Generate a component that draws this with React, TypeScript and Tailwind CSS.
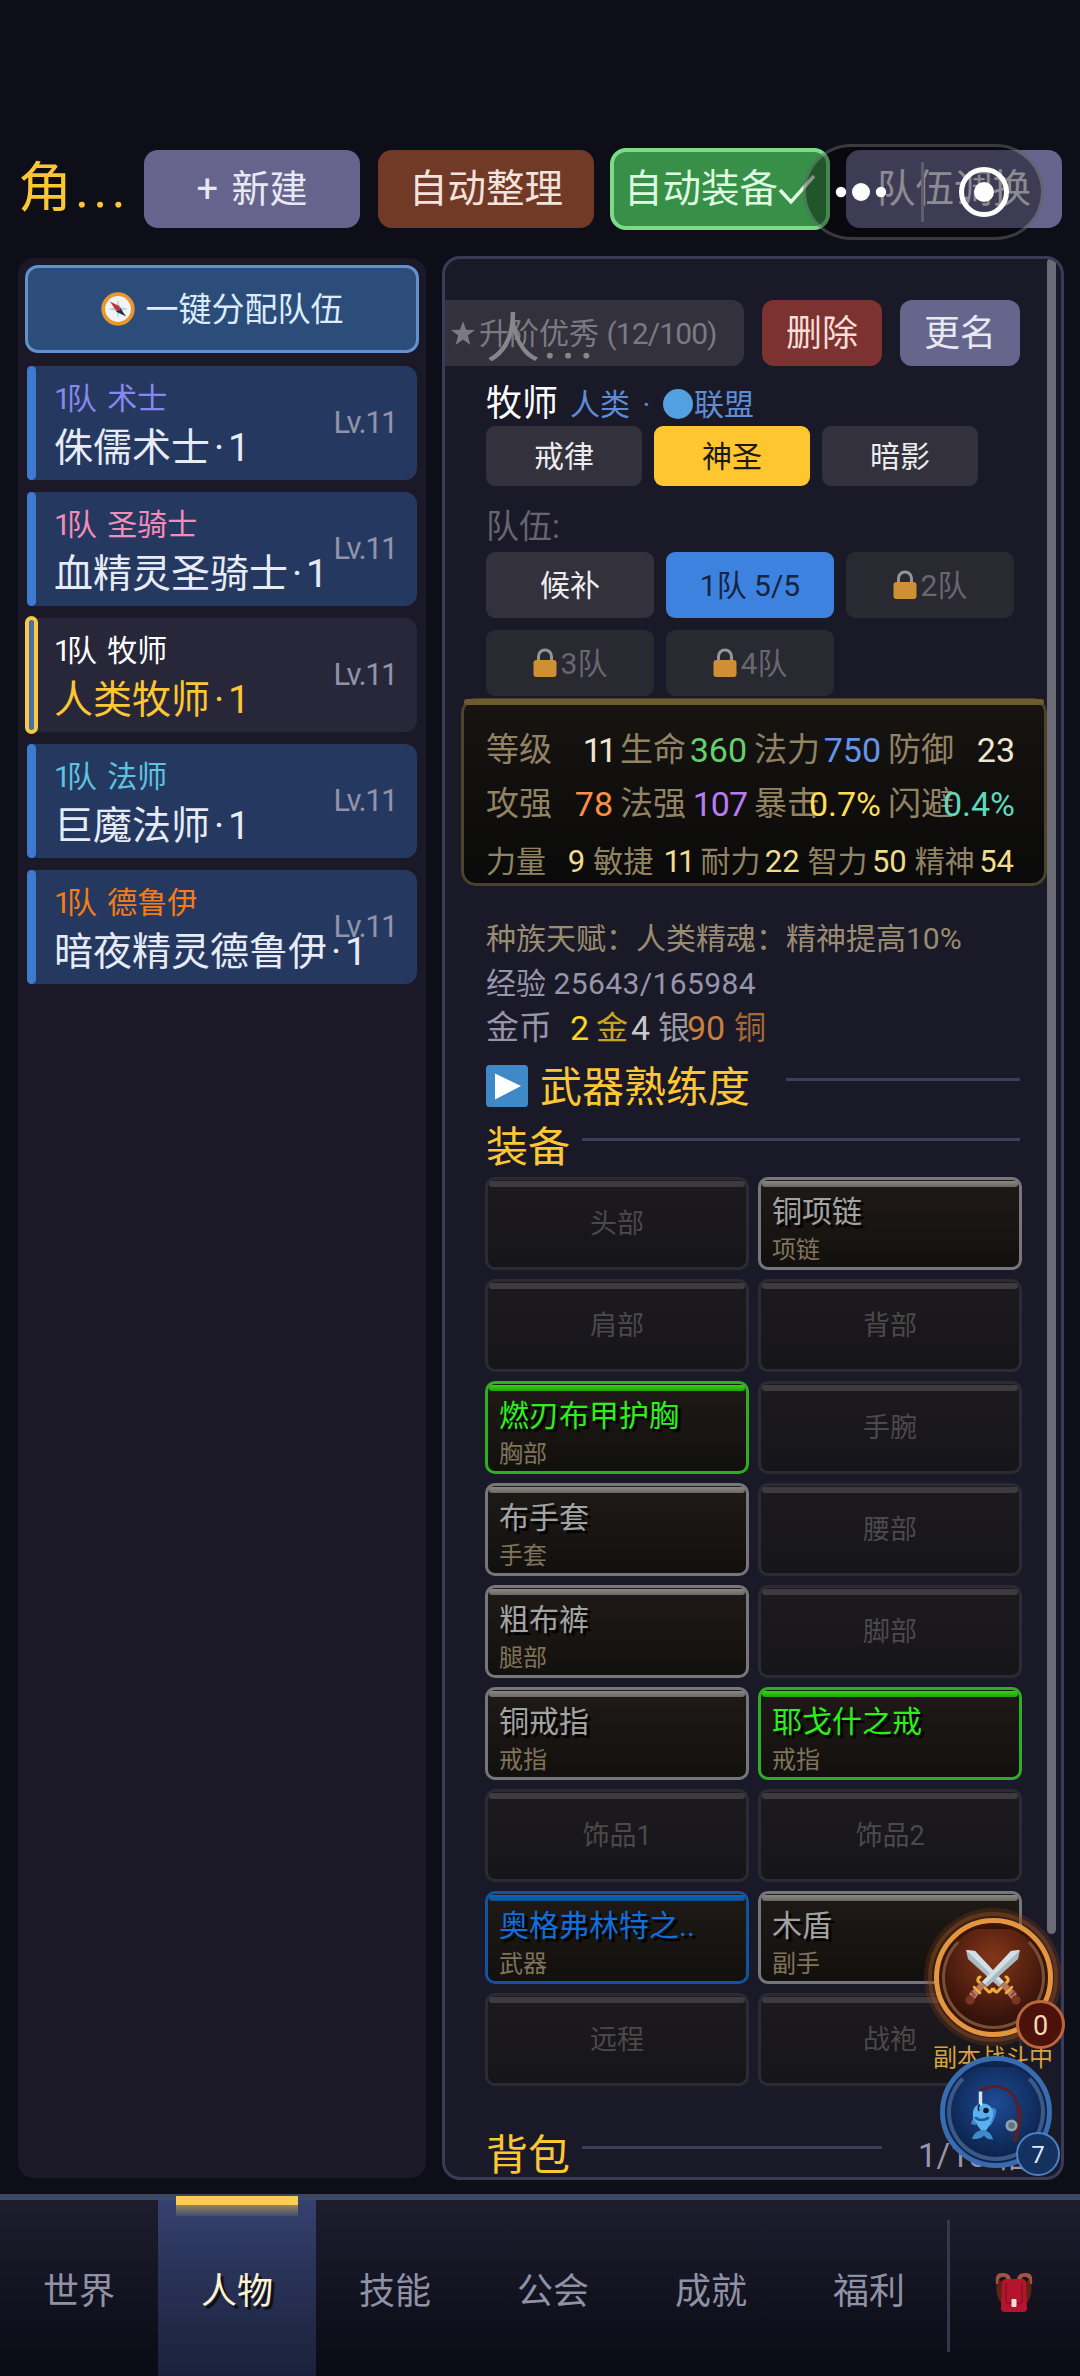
import React from "react";

type Member = { job: string; jobColor: string; name: string; selected?: boolean };

const members: Member[] = [
  { job: "术士", jobColor: "text-[#8788ee]", name: "侏儒术士" },
  { job: "圣骑士", jobColor: "text-[#f48cba]", name: "血精灵圣骑士" },
  { job: "牧师", jobColor: "text-white", name: "人类牧师", selected: true },
  { job: "法师", jobColor: "text-[#5fc3e0]", name: "巨魔法师" },
  { job: "德鲁伊", jobColor: "text-[#f77c12]", name: "暗夜精灵德鲁伊" },
];

type Quality = "empty" | "common" | "green" | "blue";
type Slot = { label: string; item?: string; quality: Quality };

const slots: Slot[] = [
  { label: "头部", quality: "empty" },
  { label: "项链", item: "铜项链", quality: "common" },
  { label: "肩部", quality: "empty" },
  { label: "背部", quality: "empty" },
  { label: "胸部", item: "燃刃布甲护胸", quality: "green" },
  { label: "手腕", quality: "empty" },
  { label: "手套", item: "布手套", quality: "common" },
  { label: "腰部", quality: "empty" },
  { label: "腿部", item: "粗布裤", quality: "common" },
  { label: "脚部", quality: "empty" },
  { label: "戒指", item: "铜戒指", quality: "common" },
  { label: "戒指", item: "耶戈什之戒", quality: "green" },
  { label: "饰品1", quality: "empty" },
  { label: "饰品2", quality: "empty" },
  { label: "武器", item: "奥格弗林特之..", quality: "blue" },
  { label: "副手", item: "木盾", quality: "common" },
  { label: "远程", quality: "empty" },
  { label: "战袍", quality: "empty" },
];

const slotStyle: Record<Quality, { border: string; bar: string; text: string }> = {
  empty: { border: "border-[#2c2b34]", bar: "bg-[#3d3b3f]", text: "" },
  common: { border: "border-[#77767a]", bar: "bg-linear-to-b from-[#8a8884] to-[#6a6864]", text: "text-[#a3a3a3]" },
  green: { border: "border-[#2fae24]", bar: "bg-linear-to-b from-[#33d414] to-[#1fa30b]", text: "text-[#2df01a]" },
  blue: { border: "border-[#12529f]", bar: "bg-linear-to-b from-[#0e66bf] to-[#0d4f96]", text: "text-[#0f6fdc]" },
};

const mainStats = [
  { label: "等级", value: "11", color: "text-[#f1e6cf] tracking-[-4px]" },
  { label: "生命", value: "360", color: "text-[#66d16b]" },
  { label: "法力", value: "750", color: "text-[#6495ee]" },
  { label: "防御", value: "23", color: "text-[#f1e6cf]" },
  { label: "攻强", value: "78", color: "text-[#fb8f45]" },
  { label: "法强", value: "107", color: "text-[#b97bf3] tracking-[-1px]" },
  { label: "暴击", value: "0.7%", color: "text-[#ffdd55]" },
  { label: "闪避", value: "0.4%", color: "text-[#5fd8bd]" },
];

const attributes = [
  { label: "力量", value: "9" },
  { label: "敏捷", value: "11" },
  { label: "耐力", value: "22" },
  { label: "智力", value: "50" },
  { label: "精神", value: "54" },
];

function Compass() {
  return (
    <svg viewBox="0 0 34 34" className="h-[34px] w-[34px]">
      <circle cx="17" cy="17" r="14.8" fill="#f2f3f5" stroke="#e8962e" strokeWidth="3.8" />
      <path d="M17 7l1.500 8 8.500 2-8.500 2-1.500 8-1.500-8-8.500-2 8.500-2z" fill="#b9cdda" />
      <path d="M9 9.500l10 5-4 4z" fill="#cf2d36" />
      <path d="M25 24.500l-10-5 4-4z" fill="#26323a" />
      <circle cx="17" cy="17" r="2" fill="#a9414d" />
    </svg>
  );
}

function Lock() {
  return (
    <svg viewBox="0 0 24 30" className="h-[30px] w-[24px]">
      <path d="M5.500 14V8.500a6.500 6.500 0 0 1 13 0V14" fill="none" stroke="#8d979d" strokeWidth="3" />
      <rect x="0.500" y="12" width="23" height="17" rx="3" fill="#cf8f35" />
    </svg>
  );
}

function Sword() {
  return (
    <g>
      <path d="M2 2l2 9 31 28 5-5L11 3z" fill="#a9bac2" />
      <path d="M2 2l9 1 29 31-3 2z" fill="#d3dfe4" />
      <path d="M30 41a3 3 0 0 0 3 3l11-11a3 3 0 0 0-2-4" fill="none" stroke="#eeb03a" strokeWidth="3" strokeLinecap="round" />
      <path d="M37 38l4-4 12 12-5 6z" fill="#b97860" />
      <path d="M43 44l3-5M47 48l4-5" stroke="#8a4a3c" strokeWidth="2" />
      <path d="M42 45l6-6" stroke="#eeb03a" strokeWidth="2.500" strokeLinecap="round" />
      <circle cx="52" cy="52" r="4.600" fill="#7b3422" />
    </g>
  );
}

function Swords() {
  return (
    <svg viewBox="0 0 58 58" className="h-[58px] w-[58px]">
      <Sword />
      <g transform="translate(58 0) scale(-1 1)">
        <Sword />
      </g>
    </svg>
  );
}

function Fishing() {
  return (
    <svg viewBox="0 0 60 60" className="h-[60px] w-[60px] shrink-0">
      <path d="M15 8C24 3 36 3 44 10c9 8 10 22 9 34" fill="none" stroke="#54202a" strokeWidth="3.200" strokeLinecap="round" />
      <path d="M53 26c1 12-1 22-4 32" fill="none" stroke="#54202a" strokeWidth="4.500" strokeLinecap="round" />
      <circle cx="45.500" cy="43.500" r="6" fill="#8fa3ad" />
      <circle cx="45.500" cy="43.500" r="3.200" fill="#5f747e" />
      <path d="M26 26c4 0 5 2 4 5-1 6-4 11-7 14z" fill="#3a86c9" />
      <path d="M9 30l-4 12 5 1z" fill="#3c8ccb" />
      <path d="M17 21.500c7 0 11 5 10 12-1 7-5 12-9 18-5-5-9-11-11-17-1-8 3-13 10-13z" fill="#5ab0f0" />
      <path d="M18 48c4 1 8 4 9 9.500-4 0-7-1-9-4-3 3-8 4-12 3.500 1-5 5-9 12-9z" fill="#3c8ccb" />
      <circle cx="20" cy="28.500" r="2.800" fill="#14181d" />
      <path d="M10 36c3 2.500 8 2.500 12 0" fill="none" stroke="#1f5a94" strokeWidth="2.800" strokeLinecap="round" />
      <path d="M14.500 9.500v14" stroke="#d3e3f4" strokeWidth="3.500" />
      <path d="M14 23c-2 0-2 4-1 6" fill="none" stroke="#14181d" strokeWidth="1.500" />
    </svg>
  );
}

function Backpack() {
  return (
    <svg viewBox="0 0 40 42" className="h-[42px] w-[40px]">
      <path d="M4 8c-3 9-2 20 6 27V12z" fill="#5f2314" />
      <path d="M36 8c3 9 2 20-6 27V12z" fill="#5f2314" />
      <path d="M2 13C1 5 3 2 8 2c6 0 8 2 9 6l-4 1c-1-3-3-4-5-3-3 1-4 3-4 7z" fill="#a3533f" />
      <path d="M38 13c1-8-1-11-6-11-6 0-8 2-9 6l4 1c1-3 3-4 5-3 3 1 4 3 4 7z" fill="#a3533f" />
      <path d="M8 12c0-3 2-4 4-4h16c2 0 4 1 4 4l1 25c0 3-1 4-4 4H11c-3 0-4-1-4-4z" fill="#b5142e" />
      <path d="M12 12v18c0 1 1 2 2 2h12c1 0 2-1 2-2V12" fill="none" stroke="#8d0f24" strokeWidth="1.600" />
      <rect x="17.500" y="28" width="5" height="8" rx="1" fill="#f2dfe2" />
    </svg>
  );
}

function Header() {
  return (
    <header className="flex h-[256px] items-start gap-[18px] px-[18px] pt-[150px]">
      <h1 className="flex h-[78px] w-[108px] items-center text-[54px] leading-none whitespace-nowrap text-[#fcc634]">
        <span>角</span>
        <span className="ml-[3px] tracking-[4px]">...</span>
      </h1>
      <button className="h-[78px] w-[216px] rounded-[14px] bg-[#66648c] text-[38px] text-[#e8e8f2] [word-spacing:4px]">+ 新建</button>
      <button className="h-[78px] w-[216px] rounded-[14px] bg-[#713a26] text-[38.5px] text-[#f2e3dc]">自动整理</button>
      <button className="-mx-[2px] -mt-[2px] flex h-[82px] w-[220px] items-center justify-center rounded-[16px] border-4 border-[#7bdc88] bg-[#378f48] text-[38.5px] whitespace-nowrap text-[#defbe2]">
        自动装备
        <svg viewBox="0 0 38 32" className="h-8 w-[38px]">
          <path d="M2 17l11 12L36 3" fill="none" stroke="#defbe2" strokeWidth="3.500" />
        </svg>
      </button>
      <button className="h-[78px] w-[216px] rounded-[14px] bg-[#66648c] text-[38.5px] text-[#e8e8f2]">队伍调换</button>
    </header>
  );
}

function SystemCapsule() {
  return (
    <div className="absolute top-[144px] left-[803px] h-[96px] w-[241px] rounded-full border-[3px] border-white/20 bg-black/40">
      <svg viewBox="0 0 235 90" className="h-full w-full">
        <circle cx="35" cy="45" r="5.200" fill="#fff" />
        <circle cx="55" cy="45" r="9" fill="#fff" />
        <circle cx="75" cy="45" r="5.200" fill="#fff" />
        <rect x="115" y="15" width="3" height="60" fill="#5d5d6c" />
        <circle cx="178" cy="45" r="22.500" fill="none" stroke="#fff" strokeWidth="5" />
        <circle cx="178" cy="45" r="10" fill="#fff" />
      </svg>
    </div>
  );
}

function MemberCard({ m }: { m: Member }) {
  return (
    <li className={`relative h-[114px] rounded-l-[5px] rounded-r-[12px] pl-[27px] ${m.selected ? "bg-[#28273a]" : "bg-[#253960]"}`}>
      <span
        className={
          m.selected
            ? "absolute -top-[2px] -left-[2px] h-[118px] w-[13px] rounded-full border-[4px] border-[#f8c846] bg-[#47719f]"
            : "absolute top-0 left-0 h-full w-[9px] rounded-full bg-[#3e7bd0]"
        }
      />
      <div className={`pt-[17px] text-[30px] leading-[32px] [word-spacing:3px] ${m.jobColor}`}>
        <span className="tracking-[-4px]">1</span>队 {m.job}
      </div>
      <div className={`relative mt-[13px] flex text-[39px] leading-[40px] whitespace-nowrap ${m.selected ? "text-[#fcc634]" : "text-[#e6ebf5]"}`}>
        {m.name}
        <span className="w-[18px] text-center">·</span>
        <span>1</span>
      </div>
      <span className="absolute top-[40px] right-[20px] text-[31px] leading-[34px] tracking-[-1.5px] text-[#9192ab]">Lv.11</span>
    </li>
  );
}

function Roster() {
  return (
    <aside className="mt-[2px] h-[1920px] w-[408px] rounded-[16px] bg-[#1b1927] px-[7px] pt-[7px]">
      <button className="flex h-[88px] w-[394px] items-center justify-center gap-[11px] rounded-[13px] border-[3px] border-[#6490cb] bg-[#2c4d79] text-[33px] text-[#dcecfb]">
        <Compass />
        <span className="mt-[2px]">一键分配队伍</span>
      </button>
      <ul className="mt-[13px] ml-[2px] flex w-[390px] flex-col gap-[12px]">
        {members.map((m) => (
          <MemberCard key={m.name} m={m} />
        ))}
      </ul>
    </aside>
  );
}

function SpecTab({ label, active }: { label: string; active?: boolean }) {
  return (
    <button className={`h-[60px] w-[156px] rounded-[9px] text-[30px] ${active ? "bg-[#ffc62f] text-[#1d1918]" : "bg-[#32313c] text-[#ececef]"}`}>
      {label}
    </button>
  );
}

function LockedTeam({ label }: { label: string }) {
  return (
    <button className="flex h-[66px] w-[168px] items-center justify-center gap-[4px] rounded-[9px] bg-[#292932] text-[30px] text-[#68676f]">
      <Lock />
      <span>{label}</span>
    </button>
  );
}

function StatBox() {
  return (
    <section className="relative mt-[2px] -ml-[25px] h-[188px] w-[586px] rounded-[15px] border-[3px] border-[#4b4228] bg-linear-to-b from-[#171411] to-[#0a0a0a] px-[22px] pt-[32px]">
      <span className="absolute -top-[2px] left-0 h-[6px] w-full rounded-full bg-[#6e5c31]" />
      <dl className="grid w-[528px] grid-cols-4 gap-x-[8px] gap-y-[20px]">
        {mainStats.map((s) => (
          <div key={s.label} className="flex h-[34px] w-[126px] items-center leading-[34px]">
            <dt className="w-[66px] shrink-0 text-[33px] text-[#928363]">{s.label}</dt>
            <dd className={`flex w-[61px] shrink-0 justify-end text-[34px] whitespace-nowrap ${s.color}`}>{s.value}</dd>
          </div>
        ))}
      </dl>
      <dl className="mt-[25px] grid w-[528px] grid-cols-5 gap-x-[8px]">
        {attributes.map((s) => (
          <div key={s.label} className="flex h-[32px] items-center justify-between leading-[32px]">
            <dt className="text-[30px] text-[#928363]">{s.label}</dt>
            <dd className={`text-[31px] text-[#f1dc8b] ${s.value === "11" ? "tracking-[-3px]" : ""}`}>{s.value}</dd>
          </div>
        ))}
      </dl>
    </section>
  );
}

function SlotCell({ slot }: { slot: Slot }) {
  const s = slotStyle[slot.quality];
  const empty = slot.quality === "empty";
  return (
    <div
      className={`relative h-[93px] w-[264px] rounded-[10px] border-[3px] ${s.border} ${
        empty ? "bg-linear-to-b from-[#1c1a1e] to-[#161519]" : "bg-linear-to-b from-[#1f1a16] to-[#12100e]"
      }`}
    >
      <span className={`absolute top-[1px] left-[1px] h-[6px] w-[256px] rounded-full ${s.bar}`} />
      {empty ? (
        <div className="flex h-full items-center justify-center pt-[2px] text-[27px] text-[#4c4949]">{slot.label}</div>
      ) : (
        <div className="pt-[15px] pl-[11px]">
          <div className={`text-[30px] leading-[34px] [text-shadow:3px_3px_1px_#000] ${s.text}`}>{slot.item}</div>
          <div className="mt-[8px] text-[24px] leading-[26px] text-[#80735b]">{slot.label}</div>
        </div>
      )}
    </div>
  );
}

function CharacterPanel() {
  return (
    <main className="relative ml-[16px] h-[1924px] w-[622px] overflow-hidden rounded-[18px] border-[3px] border-[#3b3b58] bg-[#1a1927] pt-[41px] pl-[41px]">
      <span className="absolute -top-px right-[5px] h-[1676px] w-[9px] rounded-full bg-[#6b6b76]" />
      <div className="relative -ml-[41px] flex gap-[18px]">
        <button className="flex h-[66px] w-[299px] items-center rounded-r-[12px] bg-[#32313c] pl-[6px] text-[30px] whitespace-nowrap text-[#7b7a84]">
          <svg viewBox="0 0 24 24" className="mr-[4px] h-[24px] w-[24px] shrink-0">
            <path d="M12 0l3 8.800 9 .2-7.200 5.600L19.400 24 12 18.500 4.600 24l2.600-9.400L0 9l9-.2z" fill="#7b7a84" />
          </svg>
          <span>
            升阶优秀 <span className="tracking-[-0.9px]">(12/100)</span>
          </span>
        </button>
        <button className="h-[66px] w-[120px] rounded-[12px] bg-[#7c3231] pt-[2px] text-[36px] text-[#f8dcd6]">删除</button>
        <button className="h-[66px] w-[120px] rounded-[12px] bg-[#66658c] pt-[2px] text-[36px] text-[#e8e8f2]">更名</button>
        <span className="absolute top-[13px] left-[41px] flex text-[54px] leading-[54px] text-[#86868d]">
          人<span className="ml-[3px] tracking-[4px]">...</span>
        </span>
      </div>
      <div className="mt-[18px] flex h-[36px] items-center text-[30px] leading-none text-[#5c8dd6]">
        <span className="mt-[3px] text-[36px] text-white">牧师</span>
        <span className="mt-[5px] ml-[12px]">人类</span>
        <span className="mt-[5px] w-[33px] text-center">·</span>
        <span className="mt-[3px] h-[30px] w-[30px] rounded-full bg-[#52a0e0]" />
        <span className="mt-[5px] ml-px">联盟</span>
      </div>
      <div className="mt-[6px] flex gap-[12px]">
        <SpecTab label="戒律" />
        <SpecTab label="神圣" active />
        <SpecTab label="暗影" />
      </div>
      <div className="mt-[22px] h-[40px] text-[33px] leading-[38px] text-[#65646f]">队伍:</div>
      <div className="mt-[4px] flex w-[540px] flex-wrap gap-[12px]">
        <button className="h-[66px] w-[168px] rounded-[9px] bg-[#32313c] text-[30px] text-[#ececef]">候补</button>
        <button className="h-[66px] w-[168px] rounded-[9px] bg-[#3d82de] text-[30px] text-[#15233f]">1队 5/5</button>
        <LockedTeam label="2队" />
        <LockedTeam label="3队" />
        <LockedTeam label="4队" />
      </div>
      <StatBox />
      <p className="mt-[38px] h-[30px] text-[30px] leading-[30px] whitespace-nowrap text-[#9a8c70]">种族天赋：人类精魂：精神提高10%</p>
      <p className="mt-[15px] h-[30px] text-[30px] leading-[30px] text-[#9795ab]">
        经验 <span className="tracking-[0.4px]">25643/165984</span>
      </p>
      <div className="mt-[11px] flex h-[36px] text-[33px] leading-[36px] whitespace-nowrap">
        <span className="w-[84px] text-[#9795ab]">金币</span>
        <span className="w-[26px] text-[34px] text-[#f9d51c]">2</span>
        <span className="w-[35px] text-[32px] text-[#c9a51f]">金</span>
        <span className="w-[27px] text-[34px] text-[#c8c8c8]">4</span>
        <span className="w-[29px] text-[32px] text-[#9a9aa2]">银</span>
        <span className="w-[47px] text-[34px] text-[#c97f3f]">90</span>
        <span className="text-[32px] text-[#a3693a]">铜</span>
      </div>
      <h2 className="mt-[19px] flex h-[42px] text-[42px] leading-[46px] text-[#fcc634]">
        <svg viewBox="0 0 42 42" className="mr-[12px] h-[42px] w-[42px]">
          <rect width="42" height="42" rx="3.500" fill="#3f8ac6" />
          <path d="M9 8.500L35 21 9 34.500z" fill="#fff" />
        </svg>
        <span className="w-[246px]">武器熟练度</span>
        <span className="mt-[13px] h-[3px] w-[234px] bg-[#3f3d5a]" />
      </h2>
      <h2 className="mt-[18px] flex h-[42px] text-[42px] leading-[46px] text-[#fcc634]">
        <span className="w-[96px]">装备</span>
        <span className="mt-[13px] h-[3px] w-[438px] bg-[#3f3d5a]" />
      </h2>
      <div className="mt-[10px] -ml-px grid w-[537px] grid-cols-2 gap-[9px]">
        {slots.map((s, i) => (
          <SlotCell key={i} slot={s} />
        ))}
      </div>
      <h2 className="mt-[47px] flex h-[42px] text-[42px] leading-[46px] text-[#fcc634]">
        <span className="w-[96px]">背包</span>
        <span className="mt-[13px] mr-[36px] h-[3px] w-[300px] bg-[#3f3d5a]" />
        <span className="text-[33px] text-[#9795ab]">1/18 格</span>
      </h2>
    </main>
  );
}

function CombatBubble() {
  return (
    <div className="absolute top-[1908px] left-[924px] h-[162px] w-[142px]">
      <div className="flex h-[138px] w-[138px] items-center justify-center rounded-full bg-[#8a4318]/25 p-[3px]">
        <div className="flex h-[130px] w-[130px] shrink-0 items-center justify-center rounded-full border-[4px] border-[#8a4a20]/50">
          <div className="flex h-[119px] w-[119px] shrink-0 items-center justify-center rounded-full border-[5px] border-[#e5943f] bg-[#3a1508]">
            <div className="flex h-[103px] w-[103px] items-center justify-center rounded-full border-[3px] border-[#755037] border-t-transparent bg-[radial-gradient(circle_at_50%_30%,#84361a,#36120a_75%)]">
              <Swords />
            </div>
          </div>
        </div>
      </div>
      <span className="absolute top-[136px] left-[9px] text-[24px] leading-[28px] whitespace-nowrap text-[#d9a13f]">副本战斗中</span>
      <span className="absolute top-[92px] left-[92px] flex h-[49px] w-[49px] items-center justify-center rounded-full border-[3px] border-[#b8663a] bg-[#4c110b] pt-[3px] text-[27px] leading-none text-[#f7d8b0]">
        0
      </span>
    </div>
  );
}

function FishingBubble() {
  return (
    <div className="absolute top-[2056px] left-[940px] h-[122px] w-[122px]">
      <div className="flex h-[112px] w-[112px] items-center justify-center rounded-full border-[5px] border-[#396baf] bg-[#0d2552]">
        <div className="flex h-[98px] w-[98px] items-center justify-center rounded-full border-[4px] border-[#3c5884] border-t-transparent bg-[radial-gradient(circle_at_50%_40%,#1d4b96,#0c2149_80%)]">
          <Fishing />
        </div>
      </div>
      <span className="absolute top-[76px] left-[76px] flex h-[44px] w-[44px] items-center justify-center rounded-full border-[2px] border-[#4c82c4] bg-[#15315f] pt-[2px] text-[24px] leading-none text-[#dbe9fb]">
        7
      </span>
    </div>
  );
}

function BottomNav() {
  const tabs = ["世界", "人物", "技能", "公会", "成就", "福利"];
  return (
    <nav className="mt-[14px] flex h-[182px] border-t-[6px] border-[#3c4866] bg-linear-to-b from-[#1d1d2e] to-[#0b0b15]">
      {tabs.map((t) =>
        t === "人物" ? (
          <div key={t} className="relative flex w-[158px] items-center justify-center bg-linear-to-b from-[#35416f] to-[#1a213a] pt-[8px] text-[36px] text-[#fff3cf] [text-shadow:3px_3px_1px_#0b0d18]">
            <span className="absolute -top-[4px] left-[18px] h-[9px] w-[122px] bg-[#fdcc52]" />
            <span className="absolute top-[5px] left-[18px] h-[11px] w-[122px] bg-linear-to-b from-[#93865f] to-[#454c68]" />
            <span>{t}</span>
          </div>
        ) : (
          <div key={t} className="flex w-[158px] items-center justify-center pt-[8px] text-[36px] text-[#8f92a6]">
            {t}
          </div>
        ),
      )}
      <div className="my-[20px] mr-[44px] ml-[-1px] h-[132px] w-[3px] bg-[#35384c]" />
      <div className="flex items-center pt-[8px]">
        <Backpack />
      </div>
    </nav>
  );
}

export default function App() {
  return (
    <div className="relative h-[2376px] w-[1080px] overflow-hidden bg-[#0e0e18] font-[Roboto,'Noto_Sans_CJK_SC',sans-serif]">
      <Header />
      <div className="flex h-[1924px] pl-[18px]">
        <Roster />
        <CharacterPanel />
      </div>
      <BottomNav />
      <SystemCapsule />
      <CombatBubble />
      <FishingBubble />
    </div>
  );
}
